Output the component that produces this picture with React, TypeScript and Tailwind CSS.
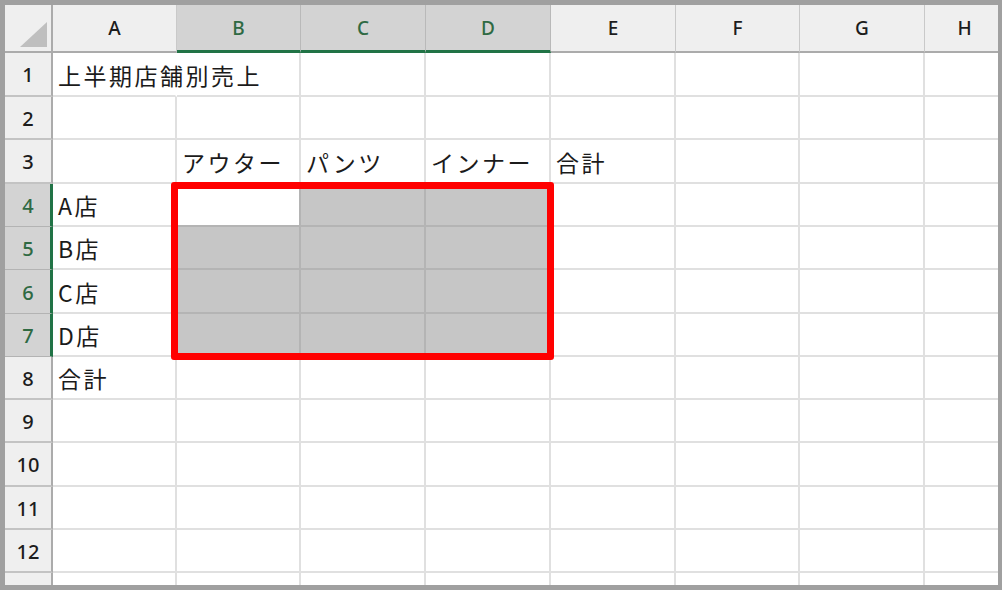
import React from "react";

type Col = { label: string; w: number };

const COLS: Col[] = [
  { label: "A", w: 124 },
  { label: "B", w: 124 },
  { label: "C", w: 125 },
  { label: "D", w: 125 },
  { label: "E", w: 125 },
  { label: "F", w: 124 },
  { label: "G", w: 125 },
  { label: "H", w: 80 },
];

const ROW_H = [44, 43, 44, 43, 43, 44, 43, 43, 43, 44, 43, 43, 43];

// cell text keyed by "row-col" (row 1-based, col 0-based)
const DATA: Record<string, string> = {
  "1-0": "上半期店舗別売上",
  "3-1": "アウター",
  "3-2": "パンツ",
  "3-3": "インナー",
  "3-4": "合計",
  "4-0": "A店",
  "5-0": "B店",
  "6-0": "C店",
  "7-0": "D店",
  "8-0": "合計",
};

const isSelRow = (r: number) => r >= 4 && r <= 7;
const isSelCol = (c: number) => c >= 1 && c <= 3;

const cellFont = {
  fontFamily: '"Noto Sans CJK JP", "Noto Sans", sans-serif',
};
const headFont = {
  fontFamily: '"Noto Sans", "Open Sans", "Liberation Sans", sans-serif',
};

function CornerCell() {
  return (
    <div className="relative h-full w-[48px] shrink-0 border-r-2 border-b-2 border-[#ababab] bg-[#efefef]">
      <svg className="absolute left-0 top-0" width="48" height="48" viewBox="0 0 48 48">
        <polygon points="42,17 42,42 15,42" fill="#bfbfbf" />
      </svg>
    </div>
  );
}

function ColumnHeader() {
  return (
    <div className="flex h-[48px] shrink-0">
      <CornerCell />
      {COLS.map((c, i) => {
        const sel = isSelCol(i);
        return (
          <div
            key={c.label}
            style={{ width: c.w, ...headFont }}
            className={
              sel
                ? "flex shrink-0 items-center justify-center border-r border-b-[3px] border-r-[#b9b9b9] border-b-[#217346] bg-[#d3d3d3] pt-[1px] text-[19px] font-medium text-[#2f6a43]"
                : "flex shrink-0 items-center justify-center border-r border-b-2 border-r-[#c9c9c9] border-b-[#ababab] bg-[#efefef] text-[19px] font-medium text-[#1c1c1c]"
            }
          >
            {c.label}
          </div>
        );
      })}
    </div>
  );
}

function Row({ r, h }: { r: number; h: number }) {
  const selRow = isSelRow(r);
  // the last row is clipped by the frame, so its number is not drawn
  const label = r <= 12 ? String(r) : "";
  return (
    <div className="flex shrink-0" style={{ height: h }}>
      <div
        style={headFont}
        className={
          selRow
            ? "flex w-[48px] shrink-0 items-center justify-center border-b border-r-[3px] border-b-[#b3b3b3] border-r-[#217346] bg-[#d3d3d3] pl-[1px] pt-[2px] text-[20px] font-medium text-[#2f6a43]"
            : "flex w-[48px] shrink-0 items-center justify-center border-b-2 border-r-2 border-b-[#c3c3c3] border-r-[#ababab] bg-[#efefef] pt-[2px] text-[20px] font-medium text-[#1c1c1c]"
        }
      >
        {label}
      </div>
      {COLS.map((c, i) => {
        const text = DATA[`${r}-${i}`];
        const sel = selRow && isSelCol(i);
        const active = r === 4 && i === 1;
        const overflowLeft = r === 1 && i === 0;
        let cls =
          "relative flex shrink-0 items-center whitespace-nowrap pl-[5px] pt-[2px] text-[23px] tracking-[2.5px] text-[#1b1b1b] border-b-2 ";
        if (sel) {
          cls += active
            ? "bg-white border-b-[#b4b4b4] border-r-2 border-r-[#b4b4b4]"
            : "bg-[#c6c6c6] border-b-[#b4b4b4] border-r-2 border-r-[#b4b4b4]";
        } else {
          cls += overflowLeft
            ? "border-b-[#e0e0e0] border-r-2 border-r-transparent"
            : "border-b-[#e0e0e0] border-r-2 border-r-[#e0e0e0]";
        }
        return (
          <div key={c.label} style={{ width: c.w, ...cellFont }} className={cls}>
            {text ? <span className="relative z-10">{text}</span> : null}
          </div>
        );
      })}
    </div>
  );
}

export default function App() {
  return (
    <div className="h-[590px] w-[1002px] bg-[#a0a0a0] pt-[5px] pl-[5px] pr-[4px] pb-[5px]">
      <div className="relative flex h-[580px] w-[993px] flex-col overflow-hidden bg-white">
        <ColumnHeader />
        {ROW_H.map((h, i) => (
          <Row key={i} r={i + 1} h={h} />
        ))}
        {/* red outline around the selected range */}
        <div className="pointer-events-none absolute left-[166px] top-[177px] h-[178px] w-[383px] rounded-[3px] border-[7px] border-[#ff0000]" />
      </div>
    </div>
  );
}
